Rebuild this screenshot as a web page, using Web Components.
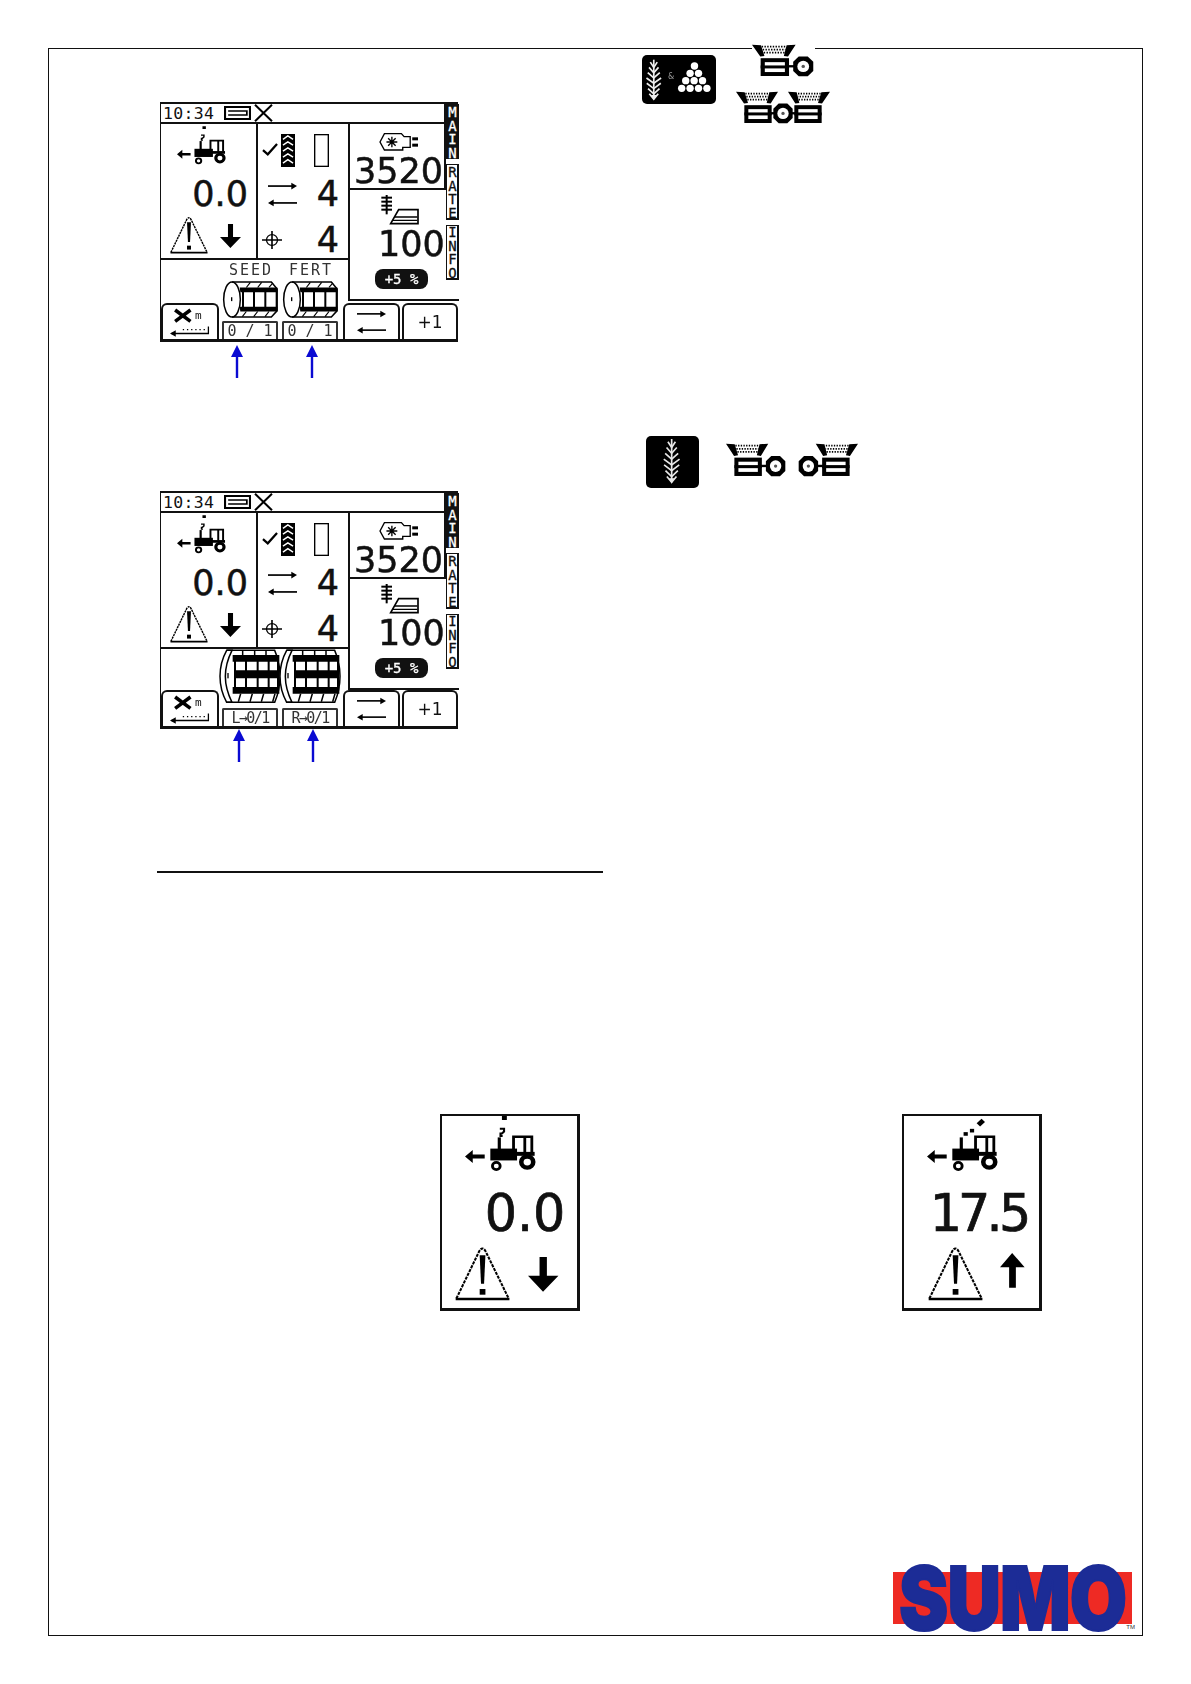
<!DOCTYPE html>
<html>
<head>
<meta charset="utf-8">
<title>Monitor screens</title>
<style>
  html, body { margin: 0; background: #fff; }
  body { padding: 48px; width: 1095px; font-family: "DejaVu Sans", sans-serif; color: #111; }
</style>
</head>
<body>
<manual-page></manual-page>
<script>
// grain of the hopper, dotted rows between the two black wedges
const grain = (x, w, y) => [0, 1, 2].map(i => `<line x1="${x + i * 3}" y1="${y + i * 9}" x2="${x + w - i * 3}" y2="${y + i * 9}" stroke="#000" stroke-width="5" stroke-dasharray="4 4"/>`).join('');

const funnel = `<path d="M0 2 26 4 36 36 24 38Z M126 2 100 4 92 36 104 38Z" fill="#000"/>${grain(28, 72, 8)}`;
const box = `<rect x="31" y="49" width="70" height="42" fill="#fff" stroke="#000" stroke-width="12"/><rect x="25" y="65" width="82" height="9" fill="#000"/>`;
const wheel = (cx) => `<path d="M${cx - 13} 38H${cx + 13}L${cx + 29} 54V82L${cx + 13} 98H${cx - 13}L${cx - 29} 82V54Z" fill="#000"/><circle cx="${cx}" cy="68" r="17" fill="#fff"/><circle cx="${cx}" cy="68" r="5" fill="#555"/>`;
const hopper = `${funnel}${box}<rect x="105" y="64" width="20" height="7" fill="#000"/>${wheel(148)}`;

const wheat = (cx, top, bottom, color, stroke) => {
  let out = `<path d="M${cx} ${top}V${bottom - 8}" stroke="${color}" stroke-width="${stroke}"/>`;
  const span = bottom - top;
  for (let y = top + span * 0.06; y < bottom - span * 0.14; y += span * 0.13) {
    const t = (y - top) / span;
    const w = span * (t < 0.5 ? 0.07 + t * 0.24 : 0.19 - (t - 0.5) * 0.24);
    out += `<path d="M${cx - w} ${y}L${cx} ${y + span * 0.13}L${cx + w} ${y}" fill="none" stroke="${color}" stroke-width="${stroke}"/>`;
  }
  return out + `<path d="M${cx - 8} ${bottom - 16}H${cx + 8}L${cx} ${bottom}Z" fill="${color}"/>`;
};

const tractorBody = (smoke) => `
  <path d="M0 120 22 100V114H56V126H22V140Z" fill="#000"/>
  <rect x="72" y="96" width="76" height="36" fill="#000"/>
  <rect x="140" y="106" width="58" height="12" fill="#000"/>
  <rect x="93" y="62" width="9" height="36" fill="#000"/>
  <path d="M138 108V60H190V108M170 60V108" fill="none" stroke="#000" stroke-width="8"/>
  <circle cx="89" cy="149" r="11" fill="#fff" stroke="#000" stroke-width="8"/>
  <circle cx="177" cy="137" r="17" fill="#fff" stroke="#000" stroke-width="13"/>
  ${smoke}`;

const ICONS = {
  tractor: ['0 0 202 163', tractorBody(`<path d="M99 36h12v8l-6 6h-4v8h6M108 0h8v6h-8Z" fill="none" stroke="#000" stroke-width="6"/>`)],
  tractorMoving: ['0 0 202 163', tractorBody(`<rect x="104" y="46" width="12" height="11" fill="#000"/><rect x="122" y="36" width="12" height="11" fill="#000"/><path d="M146 24 160 10" stroke="#000" stroke-width="14"/>`)],
  warning: ['0 0 163 155', `
    <path d="M4 148 72 14Q81 0 90 14L159 148" fill="none" stroke="#000" stroke-width="6" stroke-dasharray="9 3"/>
    <path d="M2 149H161" stroke="#000" stroke-width="7"/>
    <path d="M73 26H90L86 106H77Z" fill="#000"/><rect x="73" y="121" width="17" height="16" fill="#000"/>`],
  down: ['0 0 87 107', `<path d="M33 0H54V58H87L43 107 0 58H33Z" fill="#000"/>`],
  up: ['0 0 73 103', `<path d="M36 0 73 42H47V103H27V42H0Z" fill="#000"/>`],
  status: ['0 0 78 42', `<rect x="3" y="3" width="72" height="36" fill="#fff" stroke="#000" stroke-width="6"/><path d="M12 15H66V27H12" fill="none" stroke="#000" stroke-width="5"/>`],
  cross: ['0 0 56 52', `<path d="M3 2 53 50M53 2 3 50" stroke="#000" stroke-width="6"/>`],
  check: ['0 0 50 40', `<path d="M3 22 18 35 47 3" fill="none" stroke="#000" stroke-width="7"/>`],
  tread: ['0 0 43 100', `<rect width="43" height="100" fill="#000"/>${[6, 24, 42, 60, 78].map(y => `<path d="M6 ${y + 10}L21 ${y}L37 ${y + 10}" fill="none" stroke="#fff" stroke-width="4.5"/>`).join('')}`],
  slot: ['0 0 44 100', `<rect x="2" y="2" width="40" height="96" fill="#fff" stroke="#000" stroke-width="4"/>`],
  swap: ['0 0 87 80', `<path d="M0 15H72" stroke="#000" stroke-width="5"/><path d="M70 5 87 15 70 25Z" fill="#000"/><path d="M15 65H87" stroke="#000" stroke-width="5"/><path d="M17 55 0 65 17 75Z" fill="#000"/>`],
  target: ['0 0 62 56', `<circle cx="31" cy="28" r="17" fill="none" stroke="#000" stroke-width="4"/><path d="M31 0V56M0 28H62" stroke="#000" stroke-width="5"/>`],
  fan: ['0 0 115 60', `<path d="M3 30 16 5H66L74 14H92V46H70V54H16Z" fill="#fff" stroke="#000" stroke-width="4"/><path d="M38 14V46M22 30H54M27 19 49 41M49 19 27 41" stroke="#000" stroke-width="4"/><rect x="98" y="16" width="17" height="9" fill="#000"/><rect x="98" y="35" width="17" height="9" fill="#000"/>`],
  grainBag: ['0 0 117 90', `<path d="M20 0V58" stroke="#000" stroke-width="6"/>${[8, 20, 32, 44].map(y => `<path d="M4 ${y}H36" stroke="#000" stroke-width="6"/>`).join('')}
    <path d="M32 86 56 44H114V86Z" fill="#fff" stroke="#000" stroke-width="5"/><path d="M45 66H112M38 76H112" stroke="#000" stroke-width="4"/>`],
  clear: ['0 0 125 85', `<path d="M16 0 64 36M64 0 16 36" stroke="#000" stroke-width="11"/>
    <path d="M5 74H120V52" fill="none" stroke="#000" stroke-width="4"/><path d="M18 64 0 74 18 84Z" fill="#000"/><path d="M40 62H110" stroke="#000" stroke-width="4" stroke-dasharray="4 9"/>`],
  drum: ['0 0 165 114', `
    <ellipse cx="27" cy="57" rx="25" ry="54" fill="#fff" stroke="#000" stroke-width="4.5"/>
    <path d="M27 3H145L162 24V92L145 111H27" fill="none" stroke="#000" stroke-width="4.5"/>
    <path d="M50 20H163V35H52ZM50 79H163V94H52Z" fill="#000"/>
    <path d="M93 34V80M127 34V80M161 24V92M60 34V80" stroke="#000" stroke-width="6"/>
    <path d="M70 20 82 4M104 20 116 4M138 20 150 6M58 110 70 94M92 110 104 94M126 110 138 94" stroke="#000" stroke-width="3.5"/>
    <rect x="24" y="50" width="4" height="12" fill="#000"/>`],
  bigDrum: ['0 0 180 165', `
    <path d="M20 4Q0 40 0 82T20 160H36Q16 120 16 82T36 4Z" fill="#fff" stroke="#000" stroke-width="4.5"/>
    <path d="M20 4H164Q180 40 180 82T164 160H20" fill="none" stroke="#000" stroke-width="4.5"/>
    <path d="M38 18H178V38H38ZM42 64H178V88H42ZM38 114H178V134H38Z" fill="#000"/>
    <path d="M45 36V114M78 36V114M113 36V114M146 36V114M174 36V114" stroke="#000" stroke-width="6"/>
    <path d="M68 18V4M104 18V4M138 18V4M55 158 62 134M90 158 97 134M124 158 131 134M158 158 165 134" stroke="#000" stroke-width="4.5"/>
    <rect x="22" y="72" width="4" height="16" fill="#000"/>`],
  hopperOne: ['0 0 182 100', hopper],
  hopperMirror: ['0 0 182 100', `<g transform="translate(182 0) scale(-1 1)">${hopper}</g>`],
  hopperPair: ['0 0 282 97', `${funnel}${box}<rect x="105" y="64" width="72" height="7" fill="#000"/>${wheel(141)}
    <g transform="translate(282 0) scale(-1 1)">${funnel}${box}</g>`],
  seedBox: ['0 0 159 155', wheat(77, 9, 142, '#e8e8e8', 5)],
  seedFert: ['0 0 220 147', `${wheat(35, 14, 136, '#eee', 5)}
    ${[[156, 33], [143, 55], [168, 55], [130, 77], [155, 77], [180, 77], [118, 100], [143, 100], [168, 100], [193, 100]].map(([x, y]) => `<circle cx="${x}" cy="${y}" r="11" fill="#fff"/>`).join('')}`]
};

class LcdIcon extends HTMLElement {
  static get observedAttributes() { return ['name']; }

  constructor() {
    super();
    this.attachShadow({ mode: 'open' });
  }

  attributeChangedCallback() {
    const [view, body] = ICONS[this.getAttribute('name')];
    this.shadowRoot.innerHTML = `
      <style>
        :host { display: block; line-height: 0; }
        svg { width: 100%; height: 100%; display: block; overflow: visible; }
      </style>
      <svg viewBox="${view}" preserveAspectRatio="none">${body}</svg>`;
  }
}

// speed cell: tractor, big figure, warning and direction
const readout = document.createElement('template');
readout.innerHTML = `
  <style>
    :host { display: flex; flex-direction: column; --k: 1; }
    .tractor { width: calc(var(--k) * 49px); height: calc(var(--k) * 37px); margin-left: calc(var(--k) * 16px); margin-top: 1px; }
    .value {
      margin-top: calc(var(--k) * 18px); height: calc(var(--k) * 25px);
      font: calc(var(--k) * 35px) / calc(var(--k) * 25px) "DejaVu Sans", sans-serif; -webkit-text-stroke: calc(var(--k) * .5px) #111;
      padding-right: calc(var(--k) * 8px); text-align: right; white-space: nowrap;
    }
    .value.long { letter-spacing: -.075em; }
    .alarm { display: flex; margin-top: calc(var(--k) * 9px); margin-left: calc(var(--k) * 9px); }
    .warn { width: calc(var(--k) * 38px); height: calc(var(--k) * 38px); }
    .dir { width: calc(var(--k) * 21px); height: calc(var(--k) * 24px); margin: calc(var(--k) * 8px) 0 0 calc(var(--k) * 12px); }
    .alarm.up { margin-left: calc(var(--k) * 16.5px); }
    .alarm.up .dir { width: calc(var(--k) * 17px); margin-top: calc(var(--k) * 5px); }
  </style>
  <lcd-icon class="tractor"></lcd-icon>
  <div class="value"></div>
  <div class="alarm"><lcd-icon class="warn" name="warning"></lcd-icon><lcd-icon class="dir"></lcd-icon></div>`;

class SpeedReadout extends HTMLElement {
  constructor() {
    super();
    const body = readout.content.cloneNode(true);
    const up = this.getAttribute('dir') === 'up';
    const value = this.getAttribute('value');
    body.querySelector('.tractor').setAttribute('name', up ? 'tractorMoving' : 'tractor');
    body.querySelector('.dir').setAttribute('name', up ? 'up' : 'down');
    body.querySelector('.value').textContent = value;
    if (value.length > 3) body.querySelector('.value').classList.add('long');
    if (up) body.querySelector('.alarm').classList.add('up');
    this.attachShadow({ mode: 'open' }).appendChild(body);
  }
}

const lcd = document.createElement('template');
lcd.innerHTML = `
  <style>
    :host { display: block; width: 298px; background: #fff; filter: blur(.35px); font-family: "DejaVu Sans", sans-serif; color: #111; }
    .screen {
      display: grid; grid-template-columns: 97px 92px 96px 13px; grid-template-rows: 20px 66px 70px 20px 21px 38px;
      height: 240px; box-sizing: border-box;
      border-bottom: 3px solid #111; border-left: 1px solid #111; border-top: 2px solid #111;
    }
    :host([wide]) .screen { height: 238px; grid-template-rows: 20px 66px 70px 20px 21px 36px; }
    .bar { grid-column: 1 / 4; display: flex; align-items: center; border-bottom: 2px solid #111; border-right: 2px solid #111; box-sizing: border-box; padding-left: 2px; font: 16.5px "DejaVu Sans Mono", monospace; letter-spacing: .3px; }
    .bar .status { width: 27px; height: 14px; margin-left: 10px; }
    .bar .x { width: 19px; height: 18px; margin-left: 3px; }
    .tabs { grid-column: 4; grid-row: 1 / 5; z-index: 1; display: flex; flex-direction: column; gap: 5px; background: #fff; min-height: 0; overflow: hidden; }
    .tab {
      flex: 1; min-height: 0; writing-mode: vertical-rl; text-orientation: upright; font: 14px/13px "DejaVu Sans Mono", monospace;
      letter-spacing: -2.3px; display: flex; align-items: center; justify-content: center; width: 13px; box-sizing: border-box;
      border: 1px solid #111; border-right: 2px solid #111; border-bottom-width: 2px; -webkit-text-stroke: .3px #111;
    }
    .tab.on { background: #111; color: #fff; -webkit-text-stroke: .3px #fff; }
    .speed { grid-column: 1; grid-row: 2 / 4; border-right: 2px solid #111; border-bottom: 2px solid #111; box-sizing: border-box; padding-top: 2px; }
    .mid { grid-column: 2; grid-row: 2 / 4; border-right: 2px solid #111; border-bottom: 2px solid #111; box-sizing: border-box; display: grid; grid-template-rows: 47px 47px 1fr; }
    .row { display: flex; align-items: center; padding-left: 4px; }
    .num { margin-left: auto; margin-right: 9px; font: 35px/25px "DejaVu Sans", sans-serif; -webkit-text-stroke: .5px #111; }
    .rpm { grid-column: 3; grid-row: 2; border-right: 2px solid #111; border-bottom: 2px solid #111; box-sizing: border-box; display: flex; flex-direction: column; align-items: flex-end; padding-right: 1px; }
    .rpm lcd-icon { width: 39px; height: 20px; margin: 8px 25px 0 0; }
    .rpm .num { margin: 7px 0 0; }
    .rate { grid-column: 3 / 5; grid-row: 3 / 6; margin-left: -2px; border-left: 2px solid #111; border-bottom: 2px solid #111; box-sizing: border-box; display: flex; flex-direction: column; align-items: flex-start; padding-left: 25px; }
    .rate lcd-icon { width: 39px; height: 30px; margin: 5px 0 0 5px; }
    .rate .num { margin: 7px 0 0 3px; }
    .badge { background: #111; color: #fff; border-radius: 8px; width: 53px; height: 20px; margin-top: 12px; text-align: center; font: 14px/20px "DejaVu Sans Mono", monospace; white-space: nowrap; -webkit-text-stroke: .3px #fff; }
    .lower { grid-column: 1 / 3; grid-row: 4 / 7; display: flex; align-items: flex-end; min-height: 0; }
    .key { height: 36px; box-sizing: border-box; border: 2px solid #111; border-bottom: 0; border-radius: 6px 6px 0 0; display: flex; align-items: center; justify-content: center; font: 17px "DejaVu Sans", sans-serif; position: relative; }
    .clear { width: 58px; padding-top: 2px; flex: none; }
    .clear lcd-icon { width: 40px; height: 27px; }
    .clear span { position: absolute; left: 32px; top: 5px; font: 11px/11px "DejaVu Sans Mono", monospace; }
    .drums { display: flex; gap: 4px; margin-left: 3px; }
    .softkeys { grid-column: 3 / 5; grid-row: 6; display: flex; gap: 2px; margin-left: -7px; align-self: end; }
    .softkeys .key { width: 56px; }
    .softkeys .key:first-child { width: 57px; }
    .softkeys lcd-icon { width: 29px; height: 26px; }
  </style>
  <div class="screen">
    <div class="bar">10:34<lcd-icon class="status" name="status"></lcd-icon><lcd-icon class="x" name="cross"></lcd-icon></div>
    <div class="tabs"><div class="tab on">MAIN</div><div class="tab">RATE</div><div class="tab">INFO</div></div>
    <speed-readout class="speed" value="0.0"></speed-readout>
    <div class="mid">
      <div class="row" style="padding-top:10px;align-items:flex-start">
        <lcd-icon name="check" style="width:16px;height:13px;margin:9px 3px 0 0"></lcd-icon>
        <lcd-icon name="tread" style="width:14px;height:33px"></lcd-icon>
        <lcd-icon name="slot" style="width:15px;height:33px;margin-left:19px"></lcd-icon>
      </div>
      <div class="row" style="padding-left:10px"><lcd-icon name="swap" style="width:29px;height:27px"></lcd-icon><span class="num">4</span></div>
      <div class="row" style="padding-top:4px"><lcd-icon name="target" style="width:20px;height:18px"></lcd-icon><span class="num">4</span></div>
    </div>
    <div class="rpm"><lcd-icon name="fan"></lcd-icon><span class="num">3520</span></div>
    <div class="rate"><lcd-icon name="grainBag"></lcd-icon><span class="num">100</span><div class="badge">+5 %</div></div>
    <div class="lower">
      <div class="key clear"><lcd-icon name="clear"></lcd-icon><span>m</span></div>
      <div class="drums"><slot></slot></div>
    </div>
    <div class="softkeys"><div class="key"><lcd-icon name="swap"></lcd-icon></div><div class="key">+1</div></div>
  </div>`;

class LcdPanel extends HTMLElement {
  constructor() {
    super();
    this.attachShadow({ mode: 'open' }).appendChild(lcd.content.cloneNode(true));
  }
}

const bin = document.createElement('template');
bin.innerHTML = `
  <style>
    :host { display: flex; flex-direction: column; align-items: center; width: 56px; color: #333; }
    .label { font: 15px/15px "DejaVu Sans Mono", monospace; letter-spacing: 2px; margin-right: -2px; height: 18px; }
    .drum { width: 55px; height: 37px; }
    :host([big]) .drum { width: 60px; height: 55px; }
    .count {
      width: 56px; height: 18px; box-sizing: border-box; margin-top: 3px; border: 2px solid #333; border-bottom: 0; border-radius: 2px 2px 0 0;
      text-align: center; font: 15px/17px "DejaVu Sans Mono", monospace; white-space: nowrap;
    }
    :host([big]) .count { font-size: 15px; letter-spacing: -1.6px; margin-top: 4px; overflow: hidden; }
  </style>
  <div class="label"></div>
  <lcd-icon class="drum"></lcd-icon>
  <div class="count"></div>`;

class BinGauge extends HTMLElement {
  constructor() {
    super();
    const body = bin.content.cloneNode(true);
    const label = body.querySelector('.label');
    if (this.hasAttribute('label')) label.textContent = this.getAttribute('label');
    else label.remove();
    body.querySelector('.drum').setAttribute('name', this.hasAttribute('big') ? 'bigDrum' : 'drum');
    body.querySelector('.count').textContent = this.getAttribute('count');
    this.attachShadow({ mode: 'open' }).appendChild(body);
  }
}

// the blue pointers under the bins
class BlueArrow extends HTMLElement {
  constructor() {
    super();
    this.attachShadow({ mode: 'open' }).innerHTML = `
      <style>:host { display: block; width: 12px; height: 33px; }</style>
      <svg width="12" height="33" viewBox="0 0 12 33"><path d="M6 0 12 12H7.2V33H4.8V12H0Z" fill="#0a0ad2"/></svg>`;
  }
}

class SpeedCard extends HTMLElement {
  constructor() {
    super();
    this.attachShadow({ mode: 'open' }).innerHTML = `
      <style>
        :host { display: block; width: 140px; height: 197px; box-sizing: border-box; border: 2px solid #111; border-bottom-width: 3px; border-right-width: 3px; filter: blur(.4px); }
        speed-readout { --k: 1.45; }
      </style>
      <speed-readout value="${this.getAttribute('value')}" dir="${this.getAttribute('dir')}"></speed-readout>`;
  }
}

class SumoLogo extends HTMLElement {
  constructor() {
    super();
    this.attachShadow({ mode: 'open' }).innerHTML = `
      <style>
        :host { display: flex; align-items: center; width: 239px; height: 52px; background: #ee2a24; position: relative; }
        .word {
          font: 900 88px/52px "Inter", "Liberation Sans", sans-serif; color: #1c2c96; -webkit-text-stroke: 2px #1c2c96;
          transform: scaleX(.84); transform-origin: 0 50%; margin-left: 6px; white-space: nowrap; letter-spacing: -1px;
        }
        .tm { position: absolute; right: -3px; bottom: -6px; font: 6px "Liberation Sans", sans-serif; color: #333; }
      </style>
      <span class="word">SUMO</span><span class="tm">TM</span>`;
  }
}

const page = document.createElement('template');
page.innerHTML = `
  <style>
    :host { display: flex; flex-direction: column; height: 1588px; box-sizing: border-box; border: 1px solid #111; background: #fff; }
    .top { display: grid; grid-template-columns: 593px 1fr; }
    .screens { margin: 53px 0 0 111px; }
    lcd-panel[wide] { margin-top: 113px; }
    .pointers { display: flex; margin-top: 3px; padding-left: 71px; gap: 63px; }
    .second { padding-left: 73px; margin-top: 0; gap: 62px; }
    .legend { margin-top: -5px; filter: blur(.35px); }
    .pair { display: flex; align-items: flex-start; }
    .seedfert { width: 74px; height: 49px; margin-top: 11px; background: #000; border-radius: 5px; position: relative; }
    .seedfert lcd-icon { width: 74px; height: 49px; }
    .seedfert span { position: absolute; left: 26px; top: 17px; font: 8px "DejaVu Sans", sans-serif; color: #999; }
    .stack { margin-left: 20px; }
    .stack .a { width: 63px; height: 33px; margin-left: 16px; background: #fff; }
    .stack .b { width: 94px; height: 32px; margin-top: 14px; }
    .seedonly { margin-top: 320px; padding-left: 4px; }
    .seedbox { width: 53px; height: 52px; background: #000; border-radius: 5px; margin-top: -7px; }
    .h { width: 61px; height: 34px; }
    .h.l { margin-left: 27px; }
    .h.r { margin-left: 10px; }
    .rule { width: 446px; height: 1.5px; background: #111; margin: 109px 0 0 108px; }
    .cards { display: flex; gap: 322px; margin: 241px 0 0 391px; }
    sumo-logo { margin: auto 10px 11px auto; }
  </style>
  <div class="top">
    <div class="screens">
      <lcd-panel>
        <bin-gauge label="SEED" count="0 / 1"></bin-gauge>
        <bin-gauge label="FERT" count="0 / 1"></bin-gauge>
      </lcd-panel>
      <div class="pointers"><blue-arrow></blue-arrow><blue-arrow></blue-arrow></div>
      <lcd-panel wide>
        <bin-gauge big count="L→0/1"></bin-gauge>
        <bin-gauge big count="R→0/1"></bin-gauge>
      </lcd-panel>
      <div class="pointers second"><blue-arrow></blue-arrow><blue-arrow></blue-arrow></div>
    </div>
    <div class="legend">
      <div class="pair">
        <div class="seedfert"><lcd-icon name="seedFert"></lcd-icon><span>&amp;</span></div>
        <div class="stack"><lcd-icon class="a" name="hopperOne"></lcd-icon><lcd-icon class="b" name="hopperPair"></lcd-icon></div>
      </div>
      <div class="pair seedonly">
        <lcd-icon class="seedbox" name="seedBox"></lcd-icon>
        <lcd-icon class="h l" name="hopperOne"></lcd-icon>
        <lcd-icon class="h r" name="hopperMirror"></lcd-icon>
      </div>
    </div>
  </div>
  <div class="rule"></div>
  <div class="cards">
    <speed-card value="0.0" dir="down"></speed-card>
    <speed-card value="17.5" dir="up"></speed-card>
  </div>
  <sumo-logo></sumo-logo>`;

class ManualPage extends HTMLElement {
  constructor() {
    super();
    this.attachShadow({ mode: 'open' }).appendChild(page.content.cloneNode(true));
  }
}

customElements.define('lcd-icon', LcdIcon);
customElements.define('speed-readout', SpeedReadout);
customElements.define('bin-gauge', BinGauge);
customElements.define('lcd-panel', LcdPanel);
customElements.define('blue-arrow', BlueArrow);
customElements.define('speed-card', SpeedCard);
customElements.define('sumo-logo', SumoLogo);
customElements.define('manual-page', ManualPage);
</script>
</body>
</html>
